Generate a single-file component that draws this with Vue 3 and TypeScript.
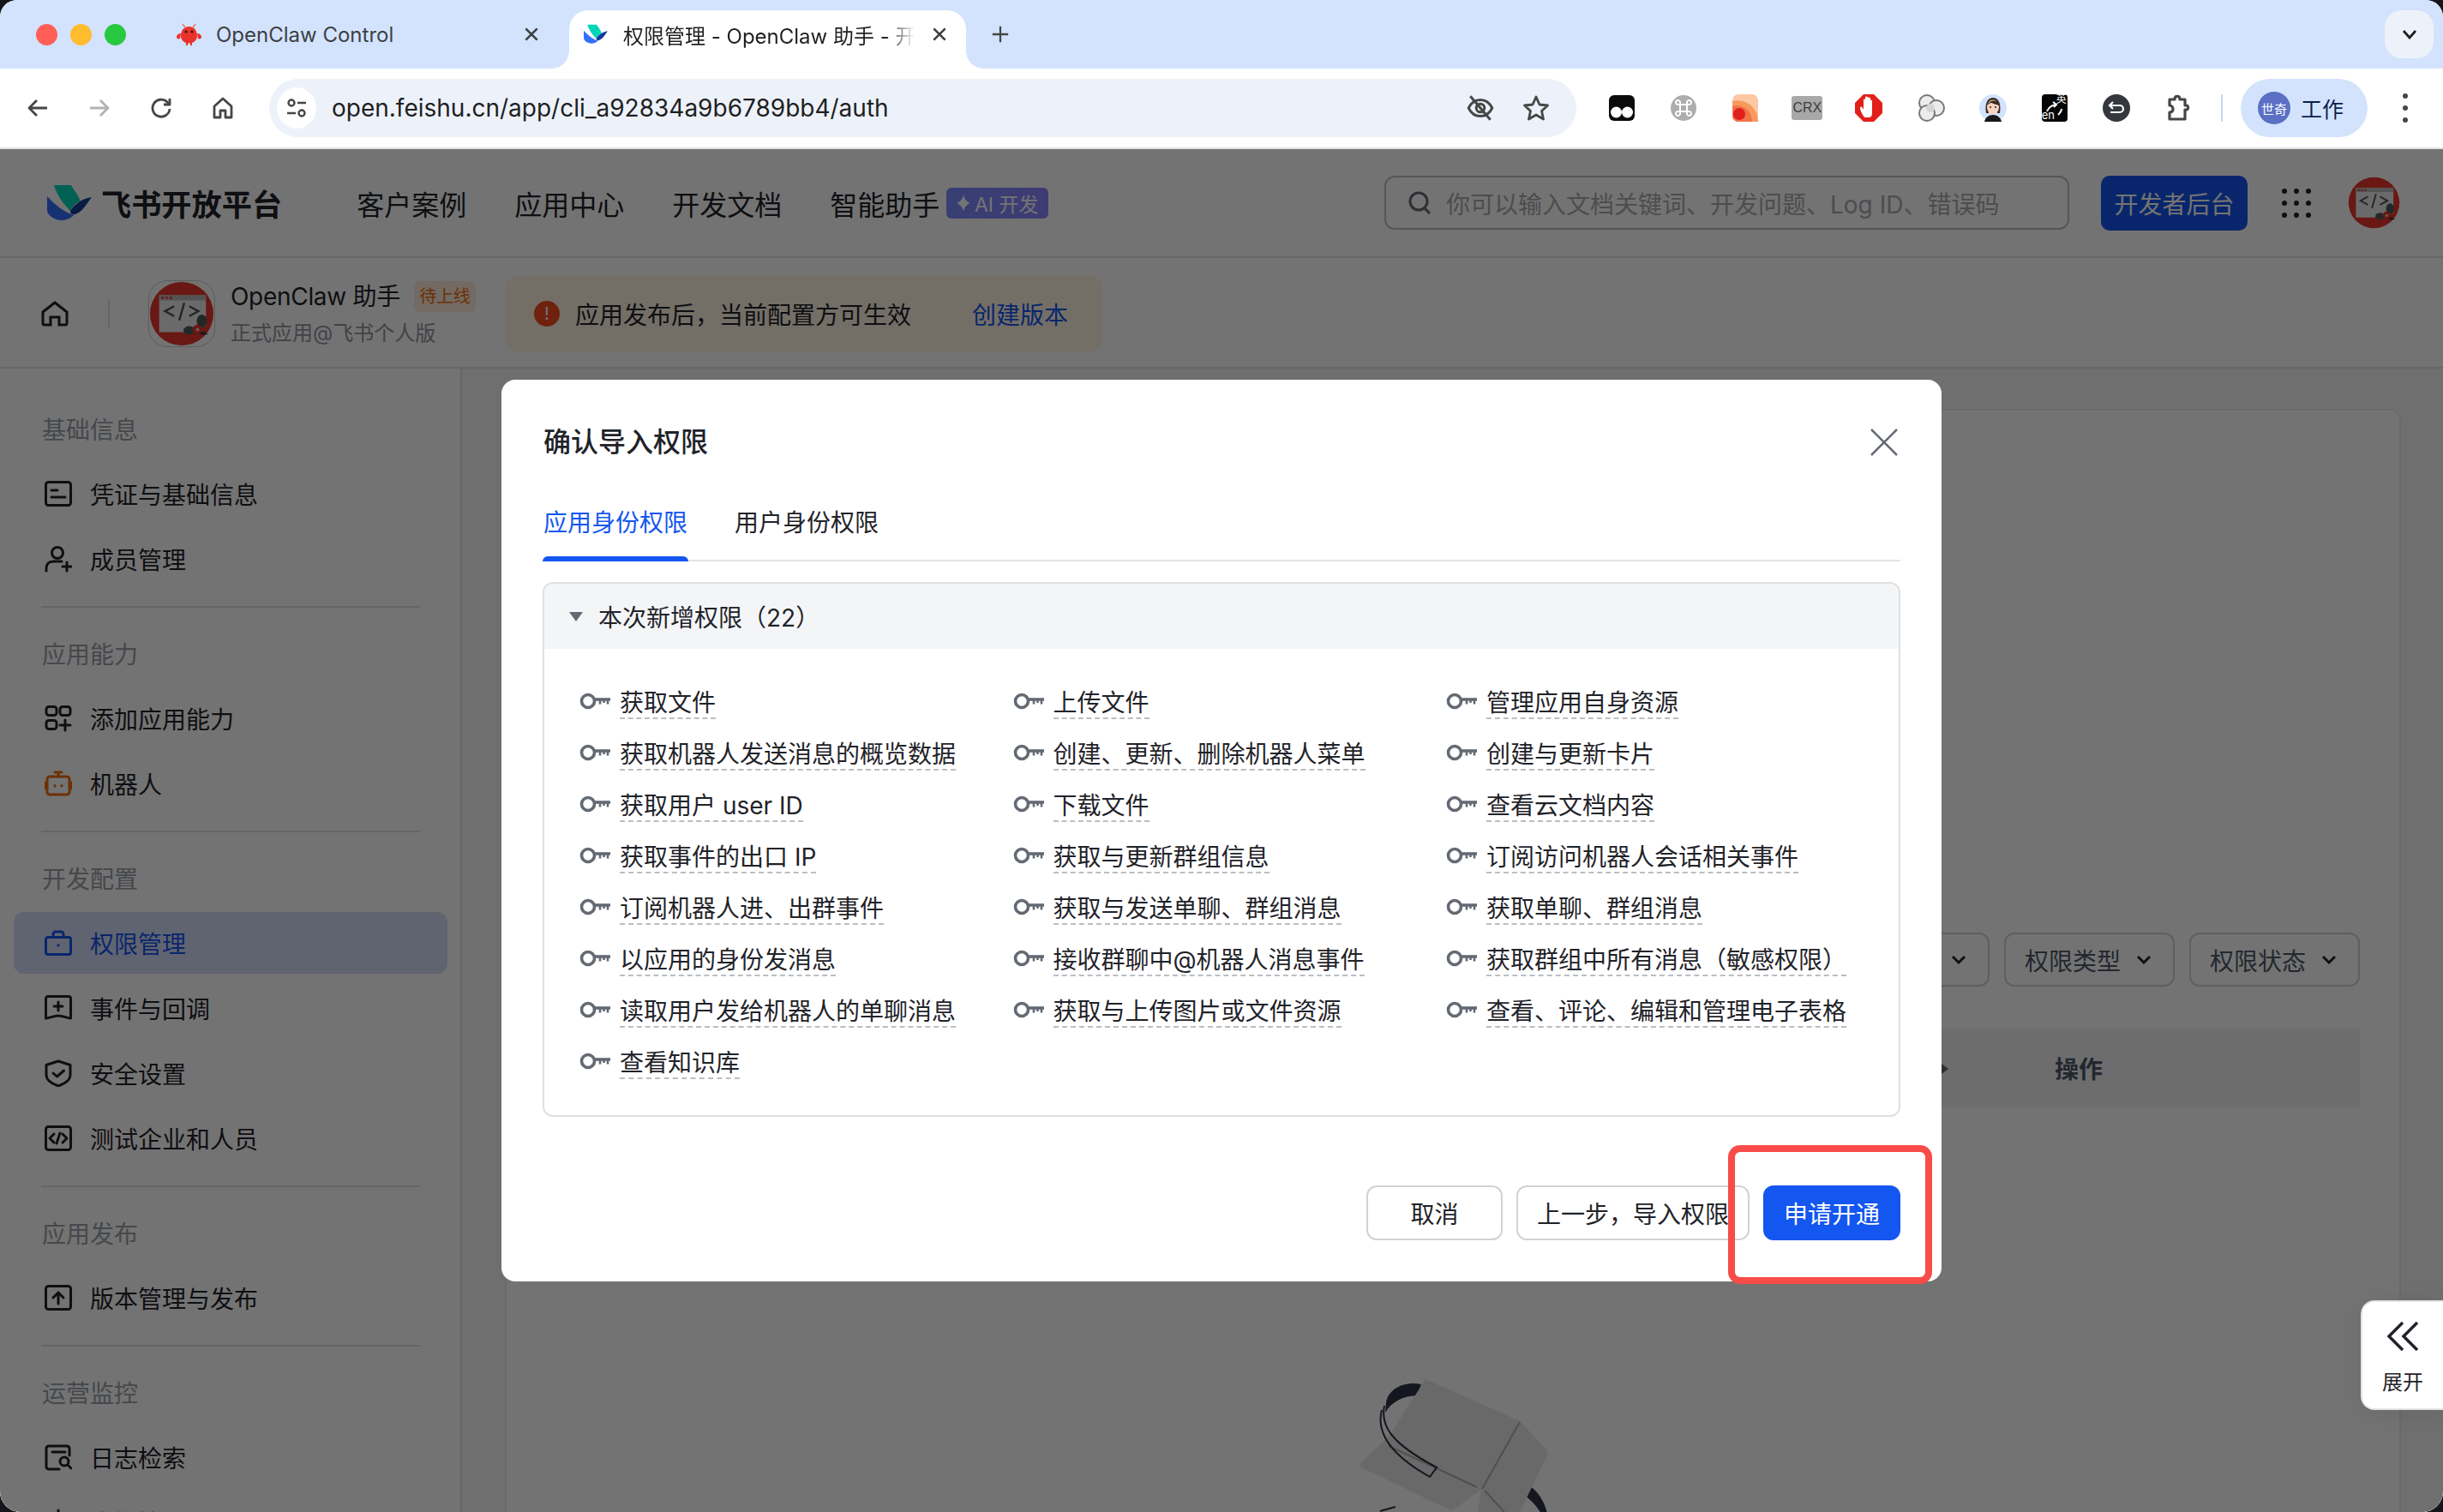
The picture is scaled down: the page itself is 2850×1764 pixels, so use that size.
<script setup lang="ts">
interface NavItem { label: string; paths: string[]; active?: boolean; tone?: string }
interface NavGroup { title: string; items: NavItem[] }

const RECT = 'M4.5 2.5h23a3 3 0 0 1 3 3v21a3 3 0 0 1-3 3h-23a3 3 0 0 1-3-3v-21a3 3 0 0 1 3-3z'

const navGroups: NavGroup[] = [
  {
    title: '基础信息',
    items: [
      { label: '凭证与基础信息', paths: [RECT, 'M8 12h7', 'M8 20h16'] },
      { label: '成员管理', paths: ['M15 2.5a6.500 6.500 0 1 1 0 13a6.500 6.500 0 1 1 0-13z', 'M2 30v-3c0-5 3-8 8-8h10', 'M21 25h10', 'M26 20v10'] }
    ]
  },
  {
    title: '应用能力',
    items: [
      {
        label: '添加应用能力',
        paths: [
          'M5 2.5h6a3 3 0 0 1 3 3v4a3 3 0 0 1-3 3H5a3 3 0 0 1-3-3v-4a3 3 0 0 1 3-3z',
          'M21 2.5h6a3 3 0 0 1 3 3v4a3 3 0 0 1-3 3h-6a3 3 0 0 1-3-3v-4a3 3 0 0 1 3-3z',
          'M5 18.500h6a3 3 0 0 1 3 3v4a3 3 0 0 1-3 3H5a3 3 0 0 1-3-3v-4a3 3 0 0 1 3-3z',
          'M24 18v12', 'M18 24h12'
        ]
      },
      {
        label: '机器人',
        tone: 'orange',
        paths: ['M6 8h20a3 3 0 0 1 3 3v15a3 3 0 0 1-3 3H6a3 3 0 0 1-3-3V11a3 3 0 0 1 3-3z', 'M16 8V3', 'M12 3h8', 'M0.5 15v7', 'M31.500 15v7', 'M12 18.500v.5', 'M20 18.500v.5']
      }
    ]
  },
  {
    title: '开发配置',
    items: [
      {
        label: '权限管理',
        active: true,
        paths: ['M4 9.500h24a2.500 2.500 0 0 1 2.500 2.500v15a2.500 2.500 0 0 1-2.500 2.500H4A2.500 2.500 0 0 1 1.500 27V12A2.500 2.500 0 0 1 4 9.500z', 'M10 9.500V6a3 3 0 0 1 3-3h6a3 3 0 0 1 3 3v3.500', 'M16 18.500v.5']
      },
      { label: '事件与回调', paths: ['M4 2.500h24a2.500 2.500 0 0 1 2.500 2.500v23c-4 0-9-3-14.500-3S5.500 28 1.500 28V5A2.500 2.500 0 0 1 4 2.500z', 'M16 9v10', 'M11 14h10'] },
      { label: '安全设置', paths: ['M16 2l14 4.500v12c0 6-7 10-14 12.500-7-2.500-14-6.500-14-12.500V6.500z', 'M10 16l4.500 4 8-7'] },
      { label: '测试企业和人员', paths: [RECT, 'M11 11l-5 5 5 5', 'M21 11l5 5-5 5', 'M18 10l-4 12'] }
    ]
  },
  {
    title: '应用发布',
    items: [{ label: '版本管理与发布', paths: [RECT, 'M16 23V10', 'M10 16l6-6 6 6'] }]
  },
  {
    title: '运营监控',
    items: [
      { label: '日志检索', paths: ['M29 14V6a3 3 0 0 0-3-3H5a3 3 0 0 0-3 3v21a3 3 0 0 0 3 3h12', 'M9 10h15', 'M23 16a5 5 0 1 1 0 10a5 5 0 1 1 0-10z', 'M27 25l4 4'] },
      { label: '告警管理', paths: ['M16 2v6'] }
    ]
  }
]

const permissions: string[] = [
  '获取文件', '上传文件', '管理应用自身资源',
  '获取机器人发送消息的概览数据', '创建、更新、删除机器人菜单', '创建与更新卡片',
  '获取用户 user ID', '下载文件', '查看云文档内容',
  '获取事件的出口 IP', '获取与更新群组信息', '订阅访问机器人会话相关事件',
  '订阅机器人进、出群事件', '获取与发送单聊、群组消息', '获取单聊、群组消息',
  '以应用的身份发消息', '接收群聊中@机器人消息事件', '获取群组中所有消息（敏感权限）',
  '读取用户发给机器人的单聊消息', '获取与上传图片或文件资源', '查看、评论、编辑和管理电子表格',
  '查看知识库'
]

const topNav: string[] = ['客户案例', '应用中心', '开发文档', '智能助手']
const gridDots: number[] = [1, 2, 3, 4, 5, 6, 7, 8, 9]
</script>

<template>
  <div class="window">
    <svg class="defs" width="0" height="0" aria-hidden="true">
      <symbol id="feishu-mark" viewBox="0 0 52 42">
        <path fill="#00d6b9" d="M8 0h20c2 4 8 11 11 19-5 1-10 6-12 11C19 22 11 11 8 0z" />
        <path fill="#3370ff" d="M0 13c8 9 19 18 31 22-7 7-18 8-26 2-3-2-5-5-5-8z" />
        <path fill="#133c9a" d="M52 14c-5 6-9 15-17 19-4 2-8 2-8-3 4-7 13-14 25-16z" />
      </symbol>
      <symbol id="code-mark" viewBox="0 0 78 78">
        <circle cx="39" cy="39" r="38" fill="#e8352a" />
        <path fill="#ececec" d="M12 17h56v37l-16 7H12z" />
        <path fill="#b8b8b8" d="M12 17h56v6H12z" />
        <circle cx="16" cy="20" r="1.500" fill="#e8352a" />
        <circle cx="21" cy="20" r="1.500" fill="#e8352a" />
        <circle cx="26" cy="20" r="1.500" fill="#e8352a" />
        <path fill="none" stroke="#555" stroke-width="2.500" d="M30 30l-11 6 11 6M48 30l11 6-11 6M42 26l-6 21" />
        <ellipse cx="63" cy="48" rx="6" ry="8" fill="#4a5a5a" />
        <ellipse cx="48" cy="59" rx="7" ry="5" fill="#4a5a5a" />
        <circle cx="58" cy="58" r="6" fill="#e8352a" />
        <path fill="#30343c" d="M64 60l7 4H60z" />
        <circle cx="58" cy="58" r="2" fill="#f5c9b5" />
      </symbol>
    </svg>

    <div class="tabstrip">
      <div class="lights">
        <span class="light red"></span>
        <span class="light yellow"></span>
        <span class="light green"></span>
      </div>
      <div class="tab first">
        <svg class="fav-claw" viewBox="0 0 31 27">
          <path fill="#e8322a" d="M15.500 4C9 4 6 9 6 15c0 4 3 7 6 8v3h2v-2.500h3V26h2v-3c3-1 6-4 6-8 0-6-3-11-9.500-11z" />
          <path fill="#e8322a" d="M6 12c-3 0-5 2-5 4s2 3 4 2zM25 12c3 0 5 2 5 4s-2 3-4 2z" />
          <path fill="none" stroke="#e87a5a" stroke-width="1.500" d="M11 5L8 1M20 5l3-4" />
          <circle cx="12" cy="10" r="1.500" fill="#3a1010" />
          <circle cx="19" cy="10" r="1.500" fill="#3a1010" />
        </svg>
        <span class="tab-label">OpenClaw Control</span>
        <svg class="tab-x" viewBox="0 0 18 18"><path d="M3 3l12 12M15 3L3 15" /></svg>
      </div>
      <div class="tab current">
        <svg class="fav-feishu"><use href="#feishu-mark" /></svg>
        <span class="tab-label fade">权限管理 - OpenClaw 助手 - 开发者后台</span>
        <svg class="tab-x" viewBox="0 0 18 18"><path d="M3 3l12 12M15 3L3 15" /></svg>
      </div>
      <div class="new-tab">
        <svg viewBox="0 0 24 24"><path d="M12 2v20M2 12h20" /></svg>
      </div>
      <div class="tab-search">
        <svg viewBox="0 0 18 12"><path d="M2 2l7 8 7-8" /></svg>
      </div>
    </div>

    <div class="toolbar">
      <div class="tool-btn">
        <svg viewBox="0 0 28 28" class="chrome-icon"><path d="M25 14H5M13 5l-9 9 9 9" /></svg>
      </div>
      <div class="tool-btn off">
        <svg viewBox="0 0 28 28" class="chrome-icon"><path d="M3 14h20M15 5l9 9-9 9" /></svg>
      </div>
      <div class="tool-btn">
        <svg viewBox="0 0 28 28" class="chrome-icon"><path d="M24 15a10 10 0 1 1-3-8l3 3" /><path d="M24 3v7h-7" /></svg>
      </div>
      <div class="tool-btn">
        <svg viewBox="0 0 28 28" class="chrome-icon"><path d="M4 12L14 3l10 9v13h-7v-8h-6v8H4z" /></svg>
      </div>
      <div class="address">
        <div class="site-info">
          <svg viewBox="0 0 28 28" class="chrome-icon thin">
            <circle cx="8" cy="8" r="3.500" /><path d="M15 8h10M3 20h10" /><circle cx="20" cy="20" r="3.500" />
          </svg>
        </div>
        <span class="url">open.feishu.cn/app/cli_a92834a9b6789bb4/auth</span>
        <svg viewBox="0 0 32 32" class="chrome-icon eye">
          <path d="M3 16c3-6 8-9 13-9s10 3 13 9c-3 6-8 9-13 9S6 22 3 16z" />
          <circle cx="16" cy="16" r="4.500" />
          <path d="M5 3l22 26" />
        </svg>
        <svg viewBox="0 0 32 32" class="chrome-icon star">
          <path d="M16 3l4 9 9.500 1-7 6.500 2 9.500-8.500-5-8.500 5 2-9.500-7-6.500 9.500-1z" />
        </svg>
      </div>
      <div class="extensions">
        <div class="ext">
          <svg viewBox="0 0 32 32">
            <rect x="1" y="1" width="30" height="30" rx="6" fill="#0b0b0b" />
            <circle cx="9.500" cy="21" r="6.500" fill="#fff" /><circle cx="22.500" cy="21" r="6.500" fill="#fff" />
          </svg>
        </div>
        <div class="ext">
          <svg viewBox="0 0 32 32">
            <circle cx="16" cy="16" r="15" fill="#adadad" />
            <path fill="none" stroke="#fff" stroke-width="2" d="M12 12h8v8h-8zM12 12h-2a2.500 2.500 0 1 1 2-2zM20 12V10a2.500 2.500 0 1 1 2 2zM12 20v2a2.500 2.500 0 1 1-2-2zM20 20h2a2.500 2.500 0 1 1-2 2z" />
          </svg>
        </div>
        <div class="ext">
          <svg viewBox="0 0 32 32">
            <rect x="1" y="0" width="30" height="32" rx="7" fill="#fcc9a4" />
            <path fill="#f79a5c" d="M1 8a24 24 0 0 1 30 24H8a7 7 0 0 1-7-7z" />
            <path fill="#f2724a" d="M1 14a18 18 0 0 1 23 18H8a7 7 0 0 1-7-7z" />
            <circle cx="9" cy="23" r="7" fill="#e0201c" />
          </svg>
        </div>
        <div class="ext">
          <div class="crx">CRX</div>
        </div>
        <div class="ext">
          <svg viewBox="0 0 32 32">
            <path fill="#e2201a" d="M10 0h12l10 10v12L22 32H10L0 22V10z" />
            <path fill="#fff" d="M11 27c-2-3-5-8-5-11 0-2 2-2 3 0l1 2V7c0-2 2-2 2 0v6-9c0-2 3-2 3 0v9-8c0-2 3-2 3 0v9V8c0-2 2-2 2 0v14c0 4-2 5-4 5z" />
          </svg>
        </div>
        <div class="ext">
          <svg viewBox="0 0 32 32" fill="#ececec" stroke="#777" stroke-width="2">
            <circle cx="11" cy="10" r="9" /><circle cx="22" cy="16" r="9" /><circle cx="11" cy="22" r="9" />
            <circle cx="15" cy="16" r="5" fill="#d4d4d4" stroke="none" />
          </svg>
        </div>
        <div class="ext">
          <svg viewBox="0 0 32 32">
            <circle cx="16" cy="16" r="16" fill="#d3e3fd" />
            <path fill="#3a2a24" d="M8 22C6 10 10 4 16 4s10 6 8 18h-3V12H11v10z" />
            <ellipse cx="16" cy="15" rx="7" ry="8.500" fill="#f6d3bf" />
            <path fill="#3a2a24" d="M9 13c2-5 8-7 13-4 1 1 1 3 1 4-4-1-8-3-10-3z" />
            <circle cx="13" cy="15" r="1" fill="#222" /><circle cx="19" cy="15" r="1" fill="#222" />
            <path fill="#16181d" d="M6 32c1-5 5-8 10-8s9 3 10 8z" />
          </svg>
        </div>
        <div class="ext">
          <svg viewBox="0 0 32 32">
            <rect x="1" y="0" width="30" height="32" rx="4" fill="#050505" />
            <path fill="none" stroke="#fff" stroke-width="2" d="M7 20c2-5 5-7 10-8M14 9l4 3-3 3M24 17c0 3-2 5-4 7" />
          </svg>
          <span class="ext-zh">英</span>
          <span class="ext-en">en</span>
        </div>
        <div class="ext">
          <svg viewBox="0 0 32 32">
            <circle cx="16" cy="16" r="16" fill="#34373c" />
            <path fill="none" stroke="#fff" stroke-width="2.200" d="M12 9L8 13l4 4M8 13h12a3.500 3.500 0 0 1 0 8H9" />
          </svg>
        </div>
        <div class="ext">
          <svg viewBox="0 0 32 32" class="chrome-icon thick">
            <path d="M6 6h6c0-5 6-5 6 0h6v7c5-1 5 6 0 5v11H6v-8c3 0 4-2 4-3.500S9 13 6 13z" />
          </svg>
        </div>
      </div>
      <span class="tool-sep"></span>
      <div class="profile">
        <span class="profile-avatar">世奇</span>
        <span class="profile-name">工作</span>
      </div>
      <div class="kebab"><i></i><i></i><i></i></div>
    </div>

    <div class="page">
      <header class="site-header">
        <svg class="logo"><use href="#feishu-mark" /></svg>
        <span class="brand">飞书开放平台</span>
        <nav class="top-nav">
          <a v-for="item in topNav" :key="item">{{ item }}</a>
        </nav>
        <span class="ai-badge">
          <svg viewBox="0 0 14 18" width="16" height="20"><path fill="currentColor" d="M7 0c1 5 3 7 7 9-4 2-6 4-7 9-1-5-3-7-7-9 4-2 6-4 7-9z" /></svg>
          AI 开发
        </span>
        <div class="search">
          <svg viewBox="0 0 30 30" class="search-icon"><circle cx="14" cy="13" r="10" /><path d="M21 21l6 6" /></svg>
          <span>你可以输入文档关键词、开发问题、Log ID、错误码</span>
        </div>
        <button class="console-btn">开发者后台</button>
        <div class="dot-grid"><i v-for="n in gridDots" :key="n"></i></div>
        <svg class="user-avatar"><use href="#code-mark" /></svg>
      </header>

      <div class="app-bar">
        <svg viewBox="0 0 34 32" class="nav-home"><path d="M3 14L17 3l14 11v13a2 2 0 0 1-2 2h-7v-9h-10v9H5a2 2 0 0 1-2-2z" /></svg>
        <span class="app-sep"></span>
        <div class="app-icon"><svg width="76" height="76"><use href="#code-mark" /></svg></div>
        <div class="app-meta">
          <div class="app-title">
            <span>OpenClaw 助手</span>
            <em>待上线</em>
          </div>
          <div class="app-sub">正式应用@飞书个人版</div>
        </div>
        <div class="notice">
          <span class="notice-dot">!</span>
          <span class="notice-text">应用发布后，当前配置方可生效</span>
          <a class="notice-link">创建版本</a>
        </div>
      </div>

      <div class="workspace">
        <aside class="sidebar">
          <section v-for="group in navGroups" :key="group.title" class="nav-group">
            <h4>{{ group.title }}</h4>
            <div
              v-for="item in group.items"
              :key="item.label"
              class="nav-item"
              :class="{ active: item.active, orange: item.tone === 'orange' }"
            >
              <svg viewBox="0 0 32 32" class="nav-icon"><path v-for="d in item.paths" :key="d" :d="d" /></svg>
              <span>{{ item.label }}</span>
            </div>
          </section>
        </aside>

        <main class="main">
          <div class="card">
            <div class="filters">
              <div class="filter"><span>权限范围</span><svg viewBox="0 0 18 12"><path d="M2 2l7 7 7-7" /></svg></div>
              <div class="filter"><span>权限类型</span><svg viewBox="0 0 18 12"><path d="M2 2l7 7 7-7" /></svg></div>
              <div class="filter"><span>权限状态</span><svg viewBox="0 0 18 12"><path d="M2 2l7 7 7-7" /></svg></div>
            </div>
            <div class="table-head">
              <i class="sorter"></i>
              <span>操作</span>
            </div>
            <svg class="empty-art" viewBox="1580 1600 230 164" width="230" height="164">
              <path fill="#2d3345" d="M1617 1637c2-16 20-26 41-22l-5 13c-18 1-30 8-37 20z" />
              <path fill="#2d3345" d="M1783 1733c12 6 20 22 22 33l-5 4c-6-12-14-20-22-26z" />
              <path fill="#e9e9e9" d="M1663 1609l110 49 30 32c3 3 3 5 2 8l-32 66h-49l4-26-32 23c-2 2-4 1-6 0l-102-49c-2-2-2-4 0-6l32-30z" />
              <path fill="none" stroke="#b0b0b0" stroke-width="2" d="M1620 1687l103 48M1773 1659l-44 78M1732 1739l23 25" />
              <path fill="none" stroke="#2d3345" stroke-width="2" d="M1615 1640c-5 25 10 45 61 72l-8 11c-50-28-62-55-56-78" />
              <path fill="none" stroke="#2d3345" stroke-width="2" d="M1610 1763l18-5" />
            </svg>
          </div>
        </main>
      </div>

      <div class="mask"></div>

      <div class="dialog" role="dialog">
        <div class="dialog-title">
          <span>确认导入权限</span>
          <svg viewBox="0 0 32 32" class="dialog-close"><path d="M1 1l30 30M31 1L1 31" /></svg>
        </div>
        <div class="dialog-tabs">
          <span class="dialog-tab on">应用身份权限</span>
          <span class="dialog-tab">用户身份权限</span>
        </div>
        <div class="perm-panel">
          <div class="perm-head">
            <i class="caret"></i>
            <span>本次新增权限（22）</span>
          </div>
          <div class="perm-grid">
            <div v-for="name in permissions" :key="name" class="perm">
              <svg viewBox="0 0 36 20" class="key">
                <circle cx="10" cy="10" r="7.500" />
                <path d="M18 8h18" />
                <path class="teeth" d="M24 8v5.500M28.500 8v4M33 8v5.500" />
              </svg>
              <span class="perm-name">{{ name }}</span>
            </div>
          </div>
        </div>
        <div class="dialog-foot">
          <button class="btn">取消</button>
          <button class="btn">上一步，导入权限</button>
          <button class="btn primary">申请开通</button>
        </div>
        <div class="callout"></div>
      </div>

      <div class="expand">
        <svg viewBox="0 0 38 36"><path d="M19 2L3 18l16 16M36 2L20 18l16 16" /></svg>
        <span>展开</span>
      </div>
    </div>
  </div>
</template>

<style>
html, body { margin: 0; background: #14161c; }
</style>

<style scoped>
* { box-sizing: border-box; }
.defs { position: absolute; }
.window {
  width: 2850px;
  height: 1764px;
  display: flex;
  flex-direction: column;
  overflow: hidden;
  background: #fff;
  border-radius: 20px 20px 24px 24px;
  font-family: Inter, "Noto Sans CJK SC", sans-serif;
  color: #1f2329;
}

/* tab strip */
.tabstrip { height: 80px; flex: none; display: flex; align-items: flex-end; background: #d3e3fd; padding-left: 42px; }
.lights { height: 80px; display: flex; align-items: center; gap: 15px; width: 148px; flex: none; }
.light { width: 25px; height: 25px; border-radius: 50%; }
.red { background: #ff5f57; }
.yellow { background: #febc2e; }
.green { background: #28c840; }
.tab { height: 68px; padding-bottom: 12px; display: flex; align-items: center; flex: none; position: relative; font-size: 24px; color: #3c4043; }
.tab.first { width: 460px; padding-left: 15px; margin-right: 14px; }
.fav-claw { width: 31px; height: 27px; margin-right: 16px; flex: none; }
.tab.current { width: 463px; padding-left: 17px; background: #fff; border-radius: 22px 22px 0 0; color: #1f1f1f; }
.tab.current::before, .tab.current::after { content: ""; position: absolute; bottom: 0; width: 20px; height: 20px; }
.tab.current::before { left: -20px; background: radial-gradient(circle at 0 0, transparent 19.500px, #fff 20px); }
.tab.current::after { right: -20px; background: radial-gradient(circle at 100% 0, transparent 19.500px, #fff 20px); }
.fav-feishu { width: 28px; height: 26px; margin-right: 18px; flex: none; }
.tab-label { white-space: nowrap; }
.tab-label.fade { width: 340px; overflow: hidden; -webkit-mask-image: linear-gradient(90deg, #000 90%, transparent); mask-image: linear-gradient(90deg, #000 90%, transparent); }
.tab-x { width: 20px; height: 20px; fill: none; stroke: #3c4043; stroke-width: 2.400; margin-left: auto; margin-right: 21px; flex: none; }
.tab.first .tab-x { margin-right: 20px; }
.new-tab { height: 68px; padding-bottom: 12px; margin-left: 29px; display: flex; align-items: center; }
.new-tab svg { width: 22px; height: 22px; fill: none; stroke: #444746; stroke-width: 2.500; }
.tab-search { width: 57px; height: 56px; margin: 0 11px 12px auto; background: #edf2fa; border-radius: 20px; display: flex; align-items: center; justify-content: center; }
.tab-search svg { width: 18px; height: 12px; fill: none; stroke: #1f1f1f; stroke-width: 2.800; }

/* toolbar */
.toolbar { height: 94px; flex: none; display: flex; align-items: center; background: #fff; padding: 0 0 0 8px; border-bottom: 2px solid #e3e3e3; border-radius: 16px 16px 0 0; }
.tool-btn { width: 72px; height: 60px; display: flex; align-items: center; justify-content: center; flex: none; }
.tool-btn svg { width: 28px; height: 28px; }
.chrome-icon { fill: none; stroke: #444746; stroke-width: 2.800; stroke-linejoin: round; }
.chrome-icon.thin { stroke-width: 2.400; }
.chrome-icon.thick { stroke-width: 3.200; }
.off .chrome-icon { stroke: #b0b2b4; }
.address { width: 1525px; height: 68px; margin-left: 18px; flex: none; background: #edf2fa; border-radius: 34px; display: flex; align-items: center; padding-left: 9px; }
.site-info { width: 46px; height: 48px; border-radius: 50%; background: #fff; display: flex; align-items: center; justify-content: center; flex: none; }
.site-info svg { width: 28px; height: 28px; }
.url { margin-left: 18px; font-size: 28px; color: #1f1f1f; font-family: Inter, sans-serif; }
.eye { width: 34px; height: 34px; margin-left: auto; }
.star { width: 32px; height: 32px; margin-left: 32px; margin-right: 31px; }
.extensions { display: flex; margin-left: 17px; flex: none; }
.ext { width: 72.100px; height: 40px; display: flex; align-items: center; justify-content: center; position: relative; }
.ext > svg { width: 32px; height: 32px; }
.crx { width: 36px; height: 28px; background: #a8a8a8; border-radius: 3px; color: #3d3d3d; font: 16px/28px "Liberation Sans", sans-serif; text-align: center; white-space: nowrap; }
.ext-zh { position: absolute; left: 38px; top: 3px; font-size: 12px; line-height: 14px; color: #fff; }
.ext-en { position: absolute; left: 21px; top: 21px; font-size: 13px; line-height: 14px; color: #fff; }
.tool-sep { width: 2px; height: 32px; background: #c7d7f1; margin-left: 14px; flex: none; }
.profile { width: 148px; height: 68px; margin-left: 21px; background: #d3e3fd; border-radius: 34px; display: flex; align-items: center; padding-left: 20px; flex: none; }
.profile-avatar { width: 38px; height: 38px; border-radius: 50%; background: #5b6fc5; color: #fff; font-size: 15px; display: flex; align-items: center; justify-content: center; white-space: nowrap; }
.profile-name { margin-left: 12px; font-size: 25px; color: #0b1f4f; }
.kebab { margin-left: 41px; display: flex; flex-direction: column; gap: 8px; }
.kebab i { width: 6px; height: 6px; border-radius: 50%; background: #444746; }

/* page */
.page { position: relative; flex: 1; min-height: 0; background: #fff; overflow: hidden; }
.site-header { height: 127px; display: flex; align-items: center; padding: 0 50px 0 55px; border-bottom: 2px solid #e4e5e7; }
.logo { width: 52px; height: 42px; flex: none; }
.brand { margin-left: 11px; font-size: 35.200px; font-weight: 700; white-space: nowrap; }
.top-nav { display: flex; gap: 56px; margin-left: 87px; font-size: 32px; white-space: nowrap; }
.ai-badge { margin-left: 8px; width: 119px; height: 36px; border-radius: 6px; background: linear-gradient(90deg, #7a8cff, #8a84ff); color: #fff; font-size: 23px; display: flex; align-items: center; justify-content: center; gap: 5px; white-space: nowrap; }
.search { margin-left: auto; width: 799px; height: 63px; border: 2px solid #bbbfc4; border-radius: 12px; display: flex; align-items: center; padding-left: 24px; gap: 16px; font-size: 28px; color: #a8abb0; white-space: nowrap; }
.search-icon { width: 30px; height: 30px; fill: none; stroke: #646a73; stroke-width: 3; flex: none; }
.console-btn { margin-left: 37px; width: 171px; height: 64px; border: 0; border-radius: 10px; background: #1456f0; color: #fff; font: inherit; font-size: 28px; white-space: nowrap; padding: 0; }
.dot-grid { margin-left: 40px; width: 34px; display: grid; grid-template-columns: repeat(3, 6px); gap: 8px 8px; }
.dot-grid i { width: 6px; height: 6px; border-radius: 50%; background: #1f2329; }
.user-avatar { margin-left: 43px; width: 61px; height: 61px; flex: none; }

.app-bar { height: 129px; display: flex; align-items: center; padding: 2px 0 0 47px; border-bottom: 2px solid #e4e5e7; }
.nav-home { width: 34px; height: 32px; fill: none; stroke: #1f2329; stroke-width: 3; flex: none; }
.app-sep { width: 2px; height: 32px; background: #dfe0e2; margin-left: 45px; flex: none; }
.app-icon { margin-left: 45px; width: 78px; height: 78px; border: 1px solid #ccc; border-radius: 22px; flex: none; display: flex; align-items: center; justify-content: center; }
.app-meta { margin-left: 18px; width: 300px; flex: none; }
.app-title { display: flex; align-items: center; font-size: 28px; line-height: 38px; height: 38px; white-space: nowrap; letter-spacing: -0.300px; }
.app-title em { margin-left: 16px; width: 72px; height: 36px; border-radius: 6px; background: #fdecdc; color: #ed6d0c; font-style: normal; font-size: 20px; line-height: 36px; text-align: center; }
.app-sub { font-size: 24px; line-height: 32px; margin-top: 8px; color: #8f959e; white-space: nowrap; }
.notice { margin-left: 21px; width: 696px; height: 88px; background: #fff4e3; border-radius: 14px; display: flex; align-items: center; padding-left: 33px; flex: none; }
.notice-dot { width: 30px; height: 30px; border-radius: 50%; background: #f54a20; color: #fff; font-size: 20px; line-height: 30px; text-align: center; flex: none; }
.notice-text { margin-left: 18px; font-size: 28px; white-space: nowrap; }
.notice-link { margin-left: 71px; font-size: 28px; color: #1456f0; white-space: nowrap; }

.workspace { display: flex; height: calc(100% - 256px); }
.sidebar { width: 539px; flex: none; padding-top: 52px; border-right: 2px solid #dfe0e2; overflow: hidden; background: #fff; }
.nav-group { padding-bottom: 19px; position: relative; }
.nav-group + .nav-group { padding-top: 37px; }
.nav-group:not(:last-child)::after { content: ""; position: absolute; left: 48px; width: 442px; bottom: 0; height: 2px; background: #e0e1e3; transform: translateY(2px); }
.nav-group h4 { margin: 0 0 18px 49px; font-size: 28px; line-height: 40px; font-weight: 400; color: #9aa0a8; }
.nav-item { margin: 0 16px 4px; width: 506px; height: 72px; padding-left: 36px; display: flex; align-items: center; gap: 21px; border-radius: 12px; font-size: 28px; }
.nav-item:last-child { margin-bottom: 0; }
.nav-icon { width: 32px; height: 32px; fill: none; stroke: #1f2329; stroke-width: 3; stroke-linecap: round; stroke-linejoin: round; flex: none; }
.nav-item.orange .nav-icon { stroke: #ed6d0c; }
.nav-item.active { background: #d5def9; color: #1456f0; }
.nav-item.active .nav-icon { stroke: #1456f0; }

.main { flex: 1; min-width: 0; background: #f6f7f9; padding: 47px 49px 0 50px; }
.card { height: 100%; min-height: 1400px; background: #fff; border: 2px solid #ebecee; border-radius: 12px 12px 0 0; padding: 609px 46px 0 46px; }
.filters { display: flex; justify-content: flex-end; gap: 17px; }
.filter { width: 199px; height: 63px; border: 2px solid #d0d3d6; border-radius: 12px; display: flex; align-items: center; padding-left: 22px; font-size: 28px; color: #4e5969; white-space: nowrap; }
.filter svg { width: 18px; height: 12px; margin-left: 18px; fill: none; stroke: #1f2329; stroke-width: 3; }
.table-head { margin-top: 49px; height: 92px; background: #f1f2f4; display: flex; align-items: center; position: relative; padding-left: 1760px; font-size: 28px; font-weight: 700; color: #4e5969; }
.sorter { position: absolute; left: 1628px; top: 41px; border-left: 8px solid #646a73; border-top: 6px solid transparent; border-bottom: 6px solid transparent; }
.empty-art { display: block; margin: 308px auto 0; overflow: hidden; }

.mask { position: absolute; inset: 0; background: rgba(0, 0, 0, 0.55); }

.dialog { position: absolute; left: 585px; top: 269px; width: 1680px; height: 1052px; background: #fff; border-radius: 16px; padding: 50px 48px 48px; }
.dialog-title { height: 46px; display: flex; align-items: center; justify-content: space-between; font-size: 32px; font-weight: 500; line-height: 46px; padding-left: 1px; }
.dialog-close { width: 32px; height: 32px; fill: none; stroke: #646a73; stroke-width: 2.500; margin-right: 3px; }
.dialog-tabs { margin-top: 50px; display: flex; gap: 55px; height: 66px; padding-left: 1px; border-bottom: 2px solid #e2e3e5; }
.dialog-tab { position: relative; font-size: 28px; line-height: 42px; height: 66px; white-space: nowrap; }
.dialog-tab.on { color: #1456f0; }
.dialog-tab.on::after { content: ""; position: absolute; left: -1px; right: -1px; bottom: 0; height: 6px; background: #1456f0; border-radius: 6px 6px 0 0; }
.perm-panel { margin-top: 24px; height: 624px; border: 2px solid #dee0e3; border-radius: 12px; overflow: hidden; }
.perm-head { height: 76px; background: #f4f5f7; display: flex; align-items: center; padding-left: 29px; font-size: 28px; }
.caret { width: 0; height: 0; border-left: 8px solid transparent; border-right: 8px solid transparent; border-top: 11px solid #646a73; margin-right: 18px; }
.perm-grid { display: grid; grid-template-columns: repeat(3, 505.500px); padding: 34px 0 0 41px; }
.perm { height: 60px; display: flex; align-items: center; gap: 11px; }
.key { width: 36px; height: 20px; margin-bottom: 6px; fill: none; stroke: #646a73; stroke-width: 3.600; flex: none; }
.key .teeth { stroke-width: 2.600; }
.perm-name { font-size: 28px; line-height: 34px; border-bottom: 2px dashed #bbbfc4; white-space: nowrap; }
.dialog-foot { margin-top: 80px; display: flex; justify-content: flex-end; gap: 16px; }
.btn { height: 64px; padding: 0 22px; border: 2px solid #d0d3d6; border-radius: 12px; background: #fff; font: inherit; font-size: 28px; color: #1f2329; min-width: 159px; white-space: nowrap; }
.btn.primary { background: #1456f0; border-color: #1456f0; color: #fff; min-width: 160px; }
.callout { position: absolute; left: 1431px; top: 893px; width: 238px; height: 162px; border: 8px solid #f84c48; border-radius: 14px; }

.expand { position: absolute; left: 2754px; top: 1343px; width: 96px; height: 128px; background: #fff; border: 2px solid #e4e5e7; border-right: 0; border-radius: 16px 0 0 16px; box-shadow: 0 4px 30px rgba(0, 0, 0, 0.08); display: flex; flex-direction: column; align-items: center; padding-top: 22px; }
.expand svg { width: 38px; height: 36px; fill: none; stroke: #1f2329; stroke-width: 3.500; }
.expand span { margin-top: 20px; font-size: 24px; line-height: 32px; }
</style>
